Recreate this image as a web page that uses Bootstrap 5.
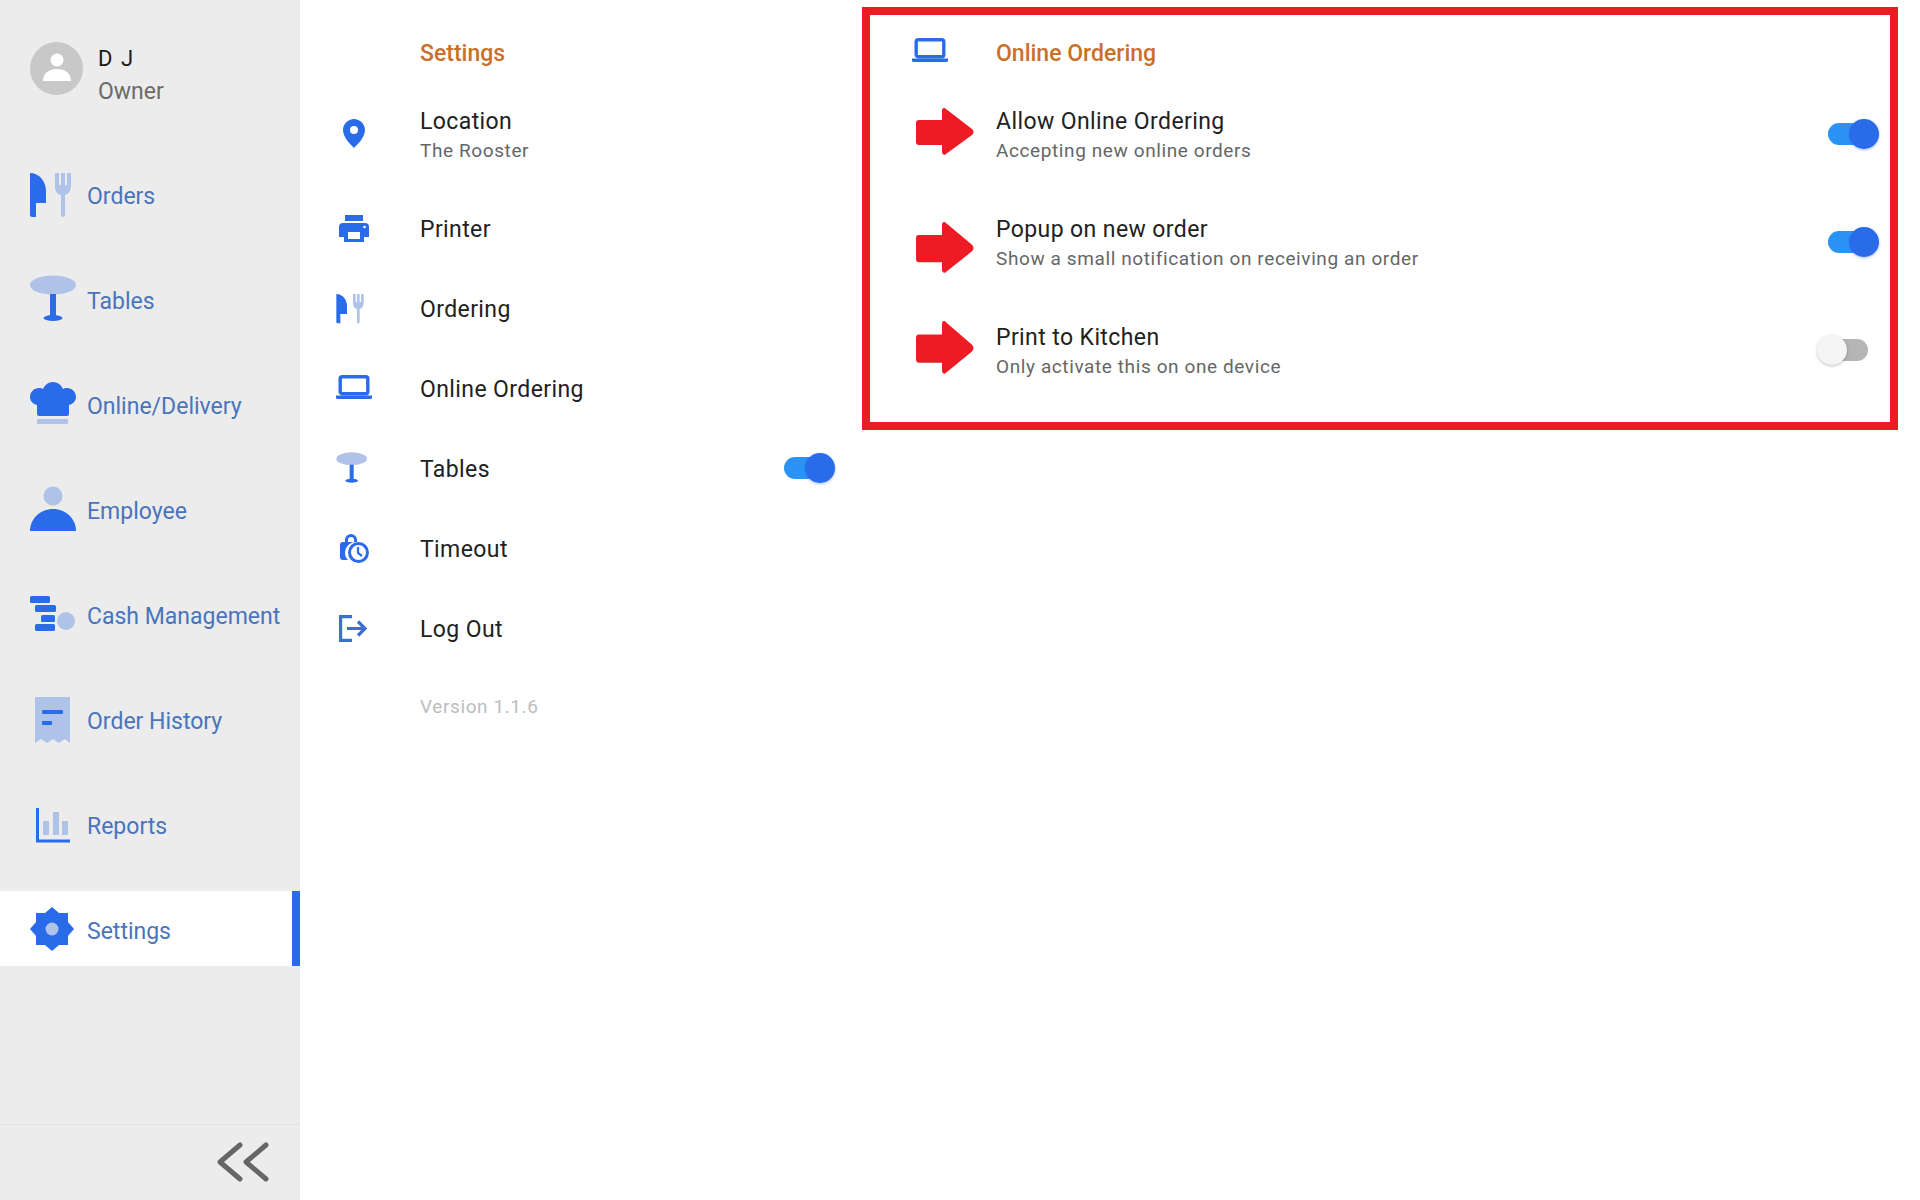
<!DOCTYPE html>
<html lang="en">
<head>
<meta charset="utf-8">
<title>Settings</title>
<link href="https://cdn.jsdelivr.net/npm/bootstrap@5.3.0/dist/css/bootstrap.min.css" rel="stylesheet">
<style>
:root{--pos-blue:#2a6bea;--pos-light:#afc3e8;}
html,body{height:100%;}
body{font-family:Roboto,"Liberation Sans",sans-serif;background:#fff;color:#212121;}
.pos-shell{width:1920px;height:1200px;overflow:hidden;}
.pos-side{width:300px;background:#ececec;flex:none;}
.pos-profile{height:156px;padding:42px 0 0 30px;gap:15px;}
.pos-avatar{width:53px;height:53px;flex:none;}
.pos-name{font-size:22px;line-height:34px;letter-spacing:1.5px;color:#1a1a1a;}
.pos-role{font-size:23px;line-height:32px;color:#6b6b6b;}
.pos-nav{gap:30px;}
.pos-nav-item{height:75px;color:#4a74bb;font-size:23px;padding-left:28px;}
.pos-nav-item.is-on{background:#fff;border-right:8px solid var(--pos-blue);}
.pos-nav-icon{width:48px;height:48px;flex:none;margin-right:11px;}
.pos-nav-label{padding-top:7px;white-space:nowrap;}
.pos-foot{height:76px;border-top:1px solid #e3e3e3;padding:0 30px 2px 0;}
.pos-list{width:562px;flex:none;padding:0 36px 0 36px;}
.pos-box{width:1036px;height:423px;margin-top:7px;border:8px solid #ed1c24;padding:0 20px 0 42px;flex:none;}
.pos-head{height:82px;padding-top:34px;}
.pos-box .pos-head{height:67px;padding-top:19px;}
.pos-slot{width:84px;flex:none;}
.pos-orange{font-size:23px;font-weight:500;color:#c9702a;line-height:40px;margin:0;}
.pos-two{height:108px;}
.pos-one{height:80px;}
.pos-title{font-size:23px;line-height:30px;letter-spacing:.4px;color:#212121;}
.pos-two .pos-title{padding-top:2px;line-height:28px;}
.pos-sub{font-size:19px;line-height:30px;letter-spacing:.6px;color:#666;}
.pos-ver{font-size:19px;line-height:30px;letter-spacing:.6px;color:#bdbdbd;margin:0 0 0 84px;padding-top:22px;}
.pos-toggle{position:relative;display:block;width:42px;height:22px;border-radius:11px;background:#2b93f5;margin-top:-4px;flex:none;}
.pos-toggle::after{content:"";position:absolute;top:-4px;left:21px;width:30px;height:30px;border-radius:50%;background:var(--pos-blue);box-shadow:0 1px 3px rgba(42,107,234,.45);}
.pos-toggle.is-off{background:#b5b5b5;margin-right:2px;}
.pos-toggle.is-off::after{left:-9px;background:#f5f5f5;box-shadow:0 1px 3px rgba(0,0,0,.25);}
.pos-arrow{display:block;width:58px;}
.pos-a1{height:47px;margin:-9px 0 0 4px;}
.pos-a2{height:51px;margin:7px 0 0 4px;}
.pos-a3{height:53px;margin:-9px 0 0 4px;}
.pos-i-pin{width:22px;height:29px;margin:-5px 0 0 7px;display:block;}
.pos-i-print{width:30px;height:27px;margin:-3px 0 0 3px;display:block;}
.pos-i-fork{width:32px;height:32px;margin:-5px 0 0 -1px;display:block;}
.pos-i-lap{width:36px;height:24px;display:block;}
.pos-one .pos-i-lap{margin-top:-6px;}
.pos-i-table{width:32px;height:32px;margin:-5px 0 0 -1px;display:block;}
.pos-i-time{width:30px;height:30px;margin:-4px 0 0 3px;display:block;}
.pos-i-out{width:29px;height:27px;margin:-3px 0 0 3px;display:block;}
.pos-lap-slot{padding-top:4px;}
</style>
</head>
<body>
<svg width="0" height="0" class="d-none" aria-hidden="true">
 <symbol id="s-orders" viewBox="0 0 48 48">
  <path fill="#2a6bea" d="M2 3c9 0 16 8 16 18v12H8v14H4a2 2 0 0 1-2-2z"/>
  <path fill="#afc3e8" d="M27 3h4v12h2V3h4v12h2V3h4v13c0 6-4 9-6 9v20a2 2 0 0 1-4 0V25c-3 0-6-3-6-9z"/>
 </symbol>
 <symbol id="s-table" viewBox="0 0 48 48">
  <ellipse cx="25" cy="10" rx="23" ry="9.500" fill="#afc3e8"/>
  <path fill="#2a6bea" d="M22 19h6v23h-6z"/>
  <ellipse cx="25" cy="43" rx="9.500" ry="3" fill="#2a6bea"/>
 </symbol>
 <symbol id="s-chef" viewBox="0 0 48 48">
  <path fill="#2a6bea" d="M9 34V25c-4-1-7-4-7-8 0-5 4-9 9-9 2 0 3 .5 4 1 2-4 5-7 10-7s8 3 10 7c1-.5 2-1 4-1 5 0 9 4 9 9 0 4-3 7-7 8v9a2 2 0 0 1-2 2H11a2 2 0 0 1-2-2z"/>
  <rect x="9" y="39" width="31" height="5" rx="1" fill="#afc3e8"/>
 </symbol>
 <symbol id="s-emp" viewBox="0 0 48 48">
  <circle cx="25" cy="11" r="9.500" fill="#afc3e8"/>
  <path fill="#2a6bea" d="M2 46c0-12 10-22 23-22s23 10 23 22z"/>
 </symbol>
 <symbol id="s-cash" viewBox="0 0 48 48">
  <rect x="2" y="6" width="20" height="7" rx="1.500" fill="#2a6bea"/>
  <rect x="7" y="15" width="21" height="7" rx="1.500" fill="#2a6bea"/>
  <rect x="13" y="25" width="14" height="7" rx="1.500" fill="#2a6bea"/>
  <rect x="7" y="34" width="20" height="7" rx="1.500" fill="#2a6bea"/>
  <circle cx="38" cy="31" r="9" fill="#afc3e8"/>
 </symbol>
 <symbol id="s-hist" viewBox="0 0 48 48">
  <path fill="#afc3e8" d="M7 2h35v46l-5-4-6 4-6-4-6 4-6-4-6 4z"/>
  <rect x="14" y="15" width="21" height="4" rx="1" fill="#2a6bea"/>
  <rect x="14" y="26" width="10" height="4" rx="1" fill="#2a6bea"/>
 </symbol>
 <symbol id="s-rep" viewBox="0 0 48 48">
  <path fill="#afc3e8" d="M15 21h6v14h-6zM25 12h6v23h-6zM34 21h6v14h-6z"/>
  <path fill="none" stroke="#2a6bea" stroke-width="3" d="M9.500 8v33H42"/>
 </symbol>
 <symbol id="s-gear" viewBox="0 0 48 48">
  <path fill="#2a6bea" d="M24 2l7 6h9v9l6 7-6 7v9h-9l-7 6-7-6H8v-9l-6-7 6-7V8h9z"/>
  <circle cx="24" cy="24" r="6.500" fill="#afc3e8"/>
 </symbol>
 <symbol id="s-pin" viewBox="0 0 22 29">
  <path fill="#2a6bea" fill-rule="evenodd" d="M11 0c6 0 11 5 11 11 0 7-7 14-11 18C7 25 0 18 0 11 0 5 5 0 11 0zm0 7a4 4 0 1 0 0 8 4 4 0 0 0 0-8z"/>
 </symbol>
 <symbol id="s-print" viewBox="0 0 30 27">
  <path fill="#2a6bea" fill-rule="evenodd" d="M6 0h18v6H6zM4 8h22a4 4 0 0 1 4 4v10h-5v5H5v-5H0V12a4 4 0 0 1 4-4zm5 9v7h12v-7z"/>
  <circle cx="25.500" cy="12" r="1.300" fill="#fff"/>
 </symbol>
 <symbol id="s-lap" viewBox="0 0 36 24">
  <rect x="4.200" y="1.700" width="27.600" height="17" rx="2" fill="none" stroke="#2a6bea" stroke-width="3.400"/>
  <path fill="#2a6bea" d="M0 20.500h36v2a1.500 1.500 0 0 1-1.500 1.500h-33A1.500 1.500 0 0 1 0 22.500z"/>
 </symbol>
 <symbol id="s-time" viewBox="0 0 30 30">
  <path fill="#2a6bea" d="M4 9h2V7a6 6 0 0 1 12 0v2h-3V7a3 3 0 0 0-6 0v2h6c-5 1-9 6-9 11 0 3 1 5 3 7H4a3 3 0 0 1-3-3V12a3 3 0 0 1 3-3z"/>
  <circle cx="19.500" cy="19.500" r="9" fill="#fff" stroke="#2a6bea" stroke-width="3"/>
  <path fill="none" stroke="#2a6bea" stroke-width="2.200" d="M19 14v6l4 3"/>
 </symbol>
 <symbol id="s-out" viewBox="0 0 29 27">
  <path fill="none" stroke="#3b6fd0" stroke-width="3.200" d="M13 1.600H1.600v23.800H13M8 13.500h19M19 6.500l7 7-7 7"/>
 </symbol>
 <symbol id="s-arrow" viewBox="0 0 58 47" preserveAspectRatio="none">
  <path fill="#ed1c24" d="M3 12h23V3c0-3 2-4 4-2l26 20c2 2 2 4 0 6L30 46c-2 2-4 0-4-2V37H3a3 3 0 0 1-3-3V15a3 3 0 0 1 3-3z"/>
 </symbol>
</svg>

<div class="pos-shell d-flex">
 <aside class="pos-side d-flex flex-column">
  <div class="pos-profile d-flex align-items-start">
   <svg class="pos-avatar" viewBox="0 0 53 53"><circle cx="26.500" cy="26.500" r="26.500" fill="#c8c8c8"/><circle cx="27" cy="18" r="6.500" fill="#fff"/><path fill="#fff" d="M13 39c0-8 6-12 14-12s14 4 14 12z"/></svg>
   <div><div class="pos-name">D J</div><div class="pos-role">Owner</div></div>
  </div>
  <nav class="pos-nav d-flex flex-column flex-grow-1">
   <a class="pos-nav-item d-flex align-items-center text-decoration-none"><svg class="pos-nav-icon"><use href="#s-orders"/></svg><span class="pos-nav-label">Orders</span></a>
   <a class="pos-nav-item d-flex align-items-center text-decoration-none"><svg class="pos-nav-icon"><use href="#s-table"/></svg><span class="pos-nav-label">Tables</span></a>
   <a class="pos-nav-item d-flex align-items-center text-decoration-none"><svg class="pos-nav-icon"><use href="#s-chef"/></svg><span class="pos-nav-label">Online/Delivery</span></a>
   <a class="pos-nav-item d-flex align-items-center text-decoration-none"><svg class="pos-nav-icon"><use href="#s-emp"/></svg><span class="pos-nav-label">Employee</span></a>
   <a class="pos-nav-item d-flex align-items-center text-decoration-none"><svg class="pos-nav-icon"><use href="#s-cash"/></svg><span class="pos-nav-label">Cash Management</span></a>
   <a class="pos-nav-item d-flex align-items-center text-decoration-none"><svg class="pos-nav-icon"><use href="#s-hist"/></svg><span class="pos-nav-label">Order History</span></a>
   <a class="pos-nav-item d-flex align-items-center text-decoration-none"><svg class="pos-nav-icon"><use href="#s-rep"/></svg><span class="pos-nav-label">Reports</span></a>
   <a class="pos-nav-item is-on d-flex align-items-center text-decoration-none"><svg class="pos-nav-icon"><use href="#s-gear"/></svg><span class="pos-nav-label">Settings</span></a>
  </nav>
  <div class="pos-foot d-flex align-items-center justify-content-end">
   <svg width="54" height="42" viewBox="0 0 54 42"><path fill="none" stroke="#666" stroke-width="5" stroke-linejoin="round" stroke-linecap="round" d="M24 4 4 21l20 17M50 4 30 21l20 17"/></svg>
  </div>
 </aside>

 <section class="pos-list">
  <div class="pos-head d-flex"><div class="pos-slot"></div><h2 class="pos-orange">Settings</h2></div>
  <div class="pos-two d-flex align-items-center"><div class="pos-slot"><svg class="pos-i-pin"><use href="#s-pin"/></svg></div><div><div class="pos-title">Location</div><div class="pos-sub">The Rooster</div></div></div>
  <div class="pos-one d-flex align-items-center"><div class="pos-slot"><svg class="pos-i-print"><use href="#s-print"/></svg></div><div class="pos-title">Printer</div></div>
  <div class="pos-one d-flex align-items-center"><div class="pos-slot"><svg class="pos-i-fork"><use href="#s-orders"/></svg></div><div class="pos-title">Ordering</div></div>
  <div class="pos-one d-flex align-items-center"><div class="pos-slot"><svg class="pos-i-lap"><use href="#s-lap"/></svg></div><div class="pos-title">Online Ordering</div></div>
  <div class="pos-one d-flex align-items-center"><div class="pos-slot"><svg class="pos-i-table"><use href="#s-table"/></svg></div><div class="pos-title flex-grow-1">Tables</div><span class="pos-toggle" role="switch" aria-checked="true"></span></div>
  <div class="pos-one d-flex align-items-center"><div class="pos-slot"><svg class="pos-i-time"><use href="#s-time"/></svg></div><div class="pos-title">Timeout</div></div>
  <div class="pos-one d-flex align-items-center"><div class="pos-slot"><svg class="pos-i-out"><use href="#s-out"/></svg></div><div class="pos-title">Log Out</div></div>
  <p class="pos-ver">Version 1.1.6</p>
 </section>

 <section class="pos-box">
  <div class="pos-head d-flex"><div class="pos-slot pos-lap-slot"><svg class="pos-i-lap"><use href="#s-lap"/></svg></div><h2 class="pos-orange">Online Ordering</h2></div>
  <div class="pos-two d-flex align-items-center"><div class="pos-slot"><svg class="pos-arrow pos-a1"><use href="#s-arrow"/></svg></div><div class="flex-grow-1"><div class="pos-title">Allow Online Ordering</div><div class="pos-sub">Accepting new online orders</div></div><span class="pos-toggle" role="switch" aria-checked="true"></span></div>
  <div class="pos-two d-flex align-items-center"><div class="pos-slot"><svg class="pos-arrow pos-a2"><use href="#s-arrow"/></svg></div><div class="flex-grow-1"><div class="pos-title">Popup on new order</div><div class="pos-sub">Show a small notification on receiving an order</div></div><span class="pos-toggle" role="switch" aria-checked="true"></span></div>
  <div class="pos-two d-flex align-items-center"><div class="pos-slot"><svg class="pos-arrow pos-a3"><use href="#s-arrow"/></svg></div><div class="flex-grow-1"><div class="pos-title">Print to Kitchen</div><div class="pos-sub">Only activate this on one device</div></div><span class="pos-toggle is-off" role="switch" aria-checked="false"></span></div>
 </section>
</div>
<script src="https://cdn.jsdelivr.net/npm/bootstrap@5.3.0/dist/js/bootstrap.bundle.min.js"></script>
</body>
</html>
